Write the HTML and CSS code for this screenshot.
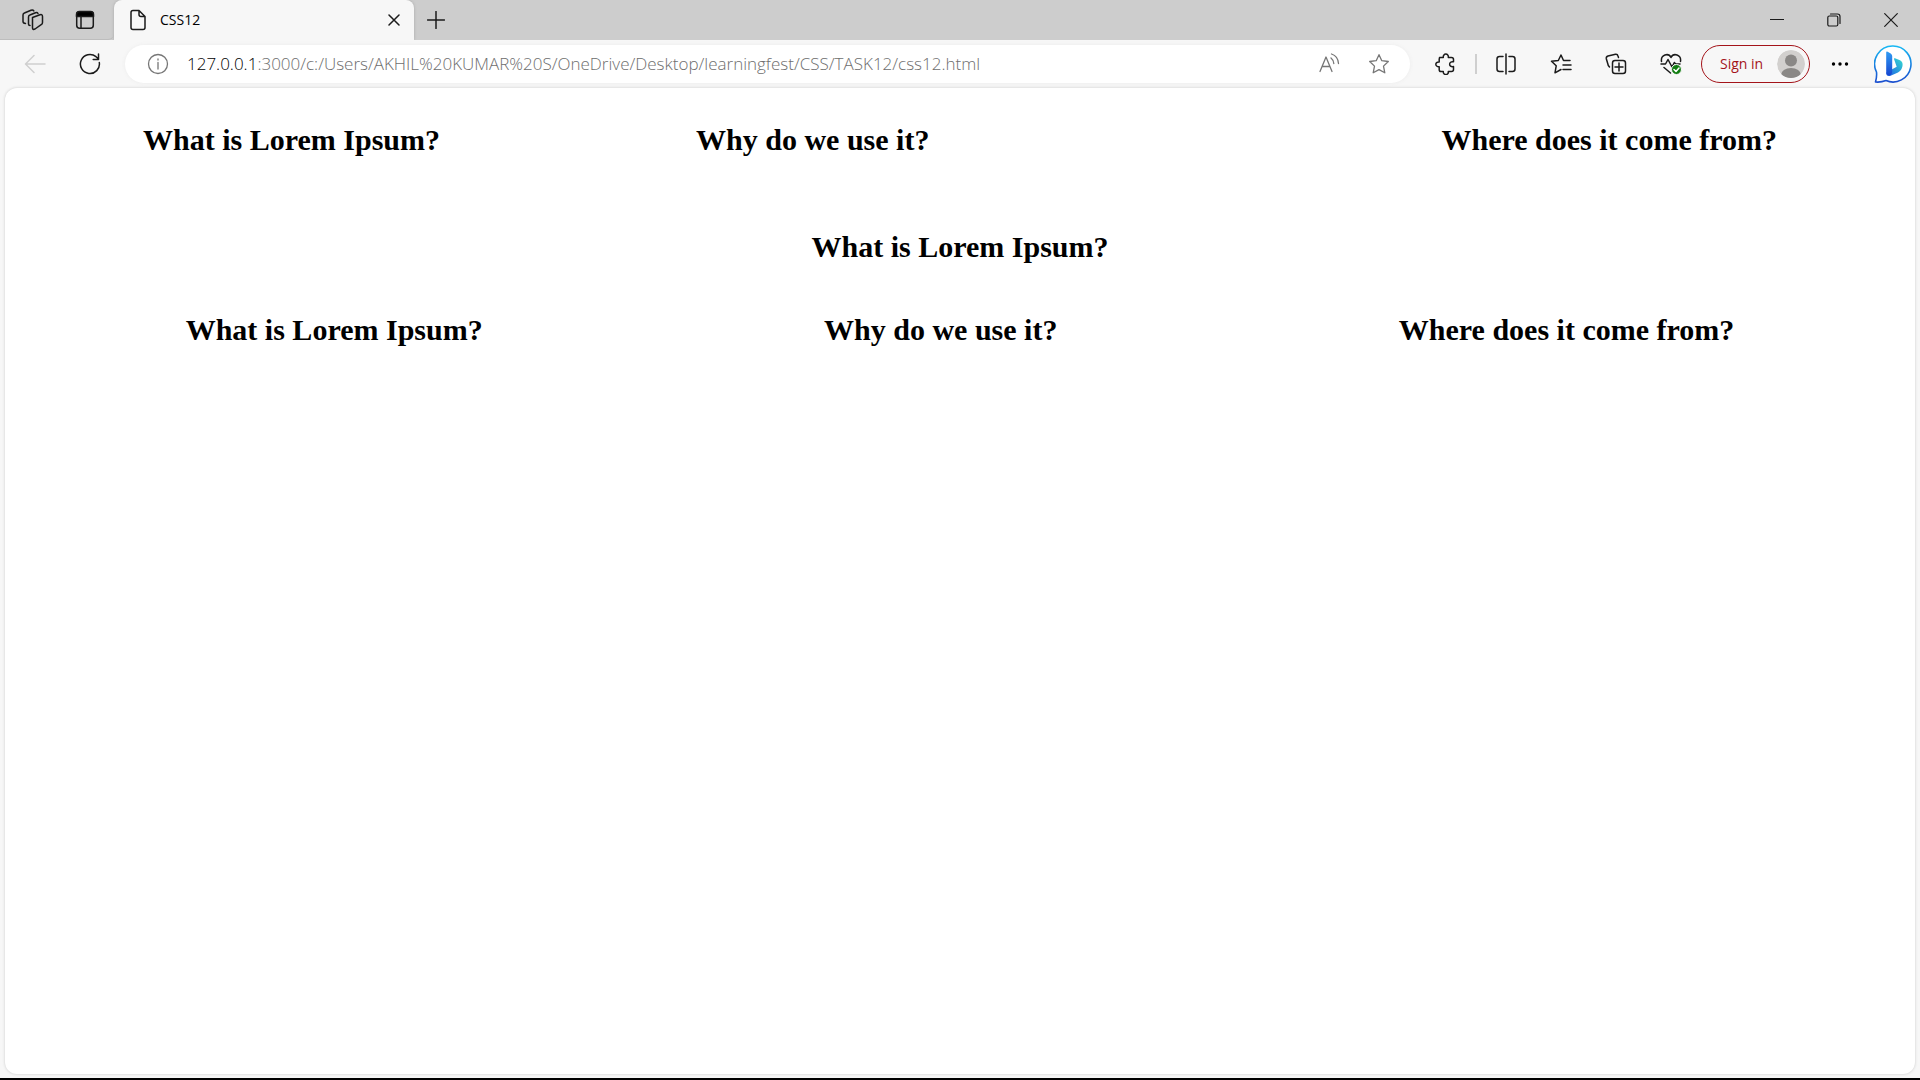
FILE: index.html
```html
<!DOCTYPE html>
<html lang="en">
<head>
<meta charset="utf-8">
<meta name="viewport" content="width=device-width, initial-scale=1">
<title>CSS12</title>
<link rel="stylesheet" href="styles.css">
</head>
<body>
<header class="tab-strip">
  <div class="strip-tools">
    <button class="icon-button" type="button" aria-label="Workspaces">
      <svg width="22" height="22" viewBox="0 0 22 22"><path d="M10.500 8.500 18 5.800q2.500-.8 2.500 1.700v6q0 1.500-1.300 2.200l-6.200 4.300q-2.500 1.200-2.500-1.200V10q0-1 0-1.500zM8 16.500q-1.500 0-1.500-1.500V8q0-1.500 1.400-2l5.600-2.300q1.800-.7 2.500.8M3.500 14.500Q1 14.300 1 12.500V6q0-1.500 1.400-2L9 1.300q2-.7 2.800.6"/></svg>
    </button>
    <button class="icon-button" type="button" aria-label="Tab actions">
      <svg width="20" height="20" viewBox="0 0 20 20"><rect x="1.700" y="1.700" width="16.600" height="16.600" rx="3"/><path d="M6 6v12"/><path class="solid" d="M1.500 6.500V4.500q0-3 3-3h11q3 0 3 3v2z"/></svg>
    </button>
  </div>
  <div class="tab">
    <svg class="tab-icon" width="18" height="22" viewBox="0 0 18 22"><path d="M2 3.500Q2 1.500 4 1.500h6L16 7.500v11q0 2-2 2H4q-2 0-2-2zM10 1.500v4q0 2 2 2h4"/></svg>
    <span class="tab-title">CSS12</span>
    <button class="tab-close" type="button" aria-label="Close tab">
      <svg width="12" height="12" viewBox="0 0 12 12"><path d="m1 1 10 10M11 1 1 11"/></svg>
    </button>
  </div>
  <button class="new-tab" type="button" aria-label="New tab">
    <svg width="18" height="18" viewBox="0 0 18 18"><path d="M9 .5v17M.5 9h17"/></svg>
  </button>
  <div class="window-controls">
    <button type="button" aria-label="Minimize"><svg class="thin" width="14" height="14" viewBox="0 0 14 14"><path d="M.5 6.500h13"/></svg></button>
    <button type="button" aria-label="Restore"><svg class="thin" width="14" height="14" viewBox="0 0 14 14"><rect x=".8" y="3" width="10" height="10" rx="1.500"/><path d="M3.500 1h7q2.500 0 2.500 2.500v7"/></svg></button>
    <button type="button" aria-label="Close window"><svg class="thin" width="14" height="14" viewBox="0 0 14 14"><path d="m.7.700 12.600 12.600M13.300.700.700 13.300"/></svg></button>
  </div>
</header>

<nav class="toolbar" aria-label="Browser toolbar">
  <button class="icon-button back" type="button" aria-label="Back">
    <svg width="22" height="20" viewBox="0 0 22 20"><path d="M21 10H2M10 1.500 1.500 10l8.500 8.500"/></svg>
  </button>
  <button class="icon-button" type="button" aria-label="Reload">
    <svg width="22" height="22" viewBox="0 0 22 22"><path d="M20.300 9.500A9.500 9.500 0 1 1 17 3.700l2.500 2.300M19.500 1v5.500h-5.300"/></svg>
  </button>
  <form class="address">
    <button class="info" type="button" aria-label="Site information">
      <svg width="22" height="22" viewBox="0 0 22 22"><circle cx="11" cy="11" r="9.500"/><path d="M11 9.500v6.500M11 6v1"/></svg>
    </button>
    <label class="host" for="url">127.0.0.1</label>
    <input class="path" id="url" type="text" spellcheck="false" value=":3000/c:/Users/AKHIL%20KUMAR%20S/OneDrive/Desktop/learningfest/CSS/TASK12/css12.html">
    <button class="address-action" type="button" aria-label="Read aloud">
      <svg width="22" height="22" viewBox="0 0 22 22"><path d="M2 18.500 8 4l6 14.500M4 13.500h8M13 5q2.500 2 2.800 5.500M13.500 1q6.500 2 7 9.500"/></svg>
    </button>
    <button class="address-action" type="button" aria-label="Add to favorites">
      <svg width="22" height="22" viewBox="0 0 22 22"><path d="M11 1.700 13.800 7.700l6.500.8-4.800 4.600 1.300 6.700L11 16.600l-5.800 3.200 1.300-6.700L1.700 8.500l6.500-.8z"/></svg>
    </button>
  </form>
  <div class="actions">
    <button class="icon-button" type="button" aria-label="Extensions">
      <svg width="22" height="22" viewBox="0 0 22 22"><path d="M5.500 4.500H9.300C8.700-.200 15 .100 14.300 4.500h3.200q2 0 2 2v2.300c-5-1-5.300 5.800 0 4.800v2.900q0 2-2 2h-3.200c.7 4-5.500 4-5 0H7q-1.800 0-1.800-1.800v-3C.700 14 .700 8.500 5.200 9V6q0-1.500 1.300-1.500"/></svg>
    </button>
    <span class="separator"></span>
    <button class="icon-button" type="button" aria-label="Split screen">
      <svg width="22" height="22" viewBox="0 0 22 22"><path d="M11 1v20M8 3.500H4.500q-2.500 0-2.500 2.500v10q0 2.500 2.500 2.500H8M14 3.500h3.500Q20 3.500 20 6v10q0 2.500-2.500 2.500H14"/></svg>
    </button>
    <button class="icon-button spaced" type="button" aria-label="Favorites">
      <svg width="22" height="22" viewBox="0 0 22 22"><path d="M20 7.500h-6.500L11 2 8.300 7.500 1.500 8.300l4.700 4.500-1.200 7L11 16.500M13 12h8M13 16.500h8"/></svg>
    </button>
    <button class="icon-button spaced" type="button" aria-label="Collections">
      <svg width="22" height="22" viewBox="0 0 22 22"><rect x="7.500" y="7.500" width="13" height="13" rx="2.500"/><path d="M14 10v8M10 14h8M4.500 14 3.300 12.500 1.300 5.700Q1 3.700 3 3L10.500 1.300q2-.3 2.500 1.700l.5 1.500"/></svg>
    </button>
    <button class="icon-button spaced" type="button" aria-label="Browser essentials">
      <svg width="22" height="22" viewBox="0 0 22 22"><path d="M1.500 8.500C.500 1.500 8.500-.500 11 4.500c2.500-5 10.500-3 9.500 4M1 11h4.500L8 6.500l4 7.500 2.300-4.500 1.500 1.500H20M4 14.500l6.500 5.500"/><circle class="badge" cx="16.500" cy="16.500" r="5"/><path class="tick" d="m14 16.500 2 2 3-3.500"/></svg>
    </button>
    <button class="sign-in" type="button">
      <span>Sign in</span>
      <svg class="avatar" width="28" height="28" viewBox="0 0 28 28"><defs><clipPath id="face"><circle cx="14" cy="14" r="14"/></clipPath></defs><g clip-path="url(#face)"><circle cx="14" cy="14" r="14" fill="#d2d0ce"/><circle cx="14" cy="10.500" r="6" fill="#8a8886"/><ellipse cx="14" cy="25" rx="10" ry="7" fill="#8a8886"/></g></svg>
    </button>
    <button class="icon-button more" type="button" aria-label="Settings and more">
      <svg width="18" height="6" viewBox="0 0 18 6"><g class="dots"><circle cx="2.500" cy="3" r="1.700"/><circle cx="9" cy="3" r="1.700"/><circle cx="15.500" cy="3" r="1.700"/></g></svg>
    </button>
    <button class="bing" type="button" aria-label="Bing chat">
      <svg width="38" height="38" viewBox="0 0 38 38"><defs><linearGradient id="ring" x1="0" y1="0" x2="0" y2="1"><stop offset="0" stop-color="#18b8f3"/><stop offset="1" stop-color="#1b4fcf"/></linearGradient><linearGradient id="stem" x1="0" y1="0" x2="0" y2="1"><stop offset="0" stop-color="#2f9cf4"/><stop offset="1" stop-color="#1646d0"/></linearGradient><linearGradient id="bowl" x1="1" y1="0" x2="0" y2="1"><stop offset="0" stop-color="#35dcd0"/><stop offset="1" stop-color="#1d5be6"/></linearGradient></defs><path d="M19 1a18 18 0 1 1-7 34.600Q7 37.500 1.500 37 3 32 2.500 27A18 18 0 0 1 19 1z" fill="#fff" stroke="url(#ring)" stroke-width="1.600"/><path d="M20 14q-.3-1 1-.7l5 2q3.200 1.600 2.500 5.700-.8 4.500-4.500 6.500L16 31q-4 .5-3.800-3.500l10.500-5.800z" fill="url(#bowl)"/><path d="M12.200 7.500q0-1.500 1.500-.7l3 1.700q1.500 1 1.500 2.500v15q0 4-3 4.500-3 .2-3-4z" fill="url(#stem)"/></svg>
    </button>
  </div>
</nav>

<main class="page">
  <section class="row row-offset">
    <h2>What is Lorem Ipsum?</h2>
    <h2>Why do we use it?</h2>
    <h2>Where does it come from?</h2>
  </section>
  <section class="row row-center">
    <h2>What is Lorem Ipsum?</h2>
  </section>
  <section class="row">
    <h2>What is Lorem Ipsum?</h2>
    <h2>Why do we use it?</h2>
    <h2>Where does it come from?</h2>
  </section>
</main>
</body>
</html>
```
FILE: styles.css
```css
* {
  box-sizing: border-box;
}

body {
  display: flex;
  flex-direction: column;
  min-height: 100vh;
  margin: 0;
  border-bottom: 2px solid #000;
  background: #f7f7f7;
  color: #000;
  font-family: "Open Sans", "Noto Sans", sans-serif;
}

button {
  display: flex;
  align-items: center;
  justify-content: center;
  padding: 0;
  border: 0;
  background: none;
  color: inherit;
  font: inherit;
}

svg {
  flex: none;
  fill: none;
  stroke: #1b1b1b;
  stroke-width: 1.5;
  stroke-linecap: round;
  stroke-linejoin: round;
}

.solid,
.dots {
  fill: #000;
}

.thin {
  stroke-width: 1.2;
}

.icon-button {
  flex: none;
  width: 40px;
  height: 40px;
}

/* Tab strip */
.tab-strip {
  display: flex;
  height: 40px;
  background: #cdcdcd;
}

.strip-tools {
  display: flex;
  gap: 12px;
  width: 114px;
  padding-left: 13px;
  border-bottom: 1px solid #bdbdbd;
  border-radius: 0 0 6px 0;
}

.tab {
  display: flex;
  align-items: center;
  width: 300px;
  padding: 0 14px 0 15px;
  border-radius: 8px 8px 0 0;
  background: #f7f7f7;
  box-shadow: 0 0 3px #a8a8a8;
  clip-path: inset(0 -3px);
}

.tab-title {
  flex: 1;
  margin-left: 13px;
  font-size: 14px;
  line-height: 20px;
}

.new-tab {
  width: 43px;
}

.window-controls {
  display: flex;
  margin-left: auto;
  padding-right: 1px;
}

.window-controls button {
  width: 57px;
}

/* Toolbar */
.toolbar {
  display: flex;
  align-items: center;
  gap: 15px;
  height: 48px;
  padding: 0 8px 0 15px;
}

.back svg {
  stroke: #cfcfcf;
}

.address {
  display: flex;
  flex: 1;
  align-items: center;
  min-width: 0;
  height: 38px;
  padding: 0 11px 0 13px;
  border-radius: 19px;
  background: #fff;
  box-shadow: 0 0 4px #ececec;
  font-size: 17px;
  font-weight: 350;
  line-height: 24px;
}

.address svg {
  stroke: #767676;
  stroke-width: 1.3;
}

.info {
  width: 40px;
}

.host {
  margin-left: 9px;
}

.path {
  flex: 1;
  min-width: 0;
  padding: 0;
  border: 0;
  outline: 0;
  background: none;
  color: #6e6e6e;
  font: inherit;
}

.address-action {
  width: 40px;
  margin-left: 10px;
}

.actions {
  display: flex;
  align-items: center;
}

.separator {
  width: 2px;
  height: 20px;
  margin: 0 9px 0 10px;
  background: #cfcfcf;
}

.spaced {
  margin-left: 15px;
}

.badge {
  fill: #107c10;
  stroke: #f7f7f7;
  stroke-width: 1;
}

.tick {
  stroke: #fff;
}

.sign-in {
  justify-content: space-between;
  width: 109px;
  height: 38px;
  margin-left: 10px;
  padding: 0 4px 0 18px;
  border: 1px solid #a4141a;
  border-radius: 19px;
  color: #a4141a;
  font-size: 14px;
  line-height: 20px;
}

.avatar {
  stroke: none;
}

.dots {
  stroke: none;
}

.more {
  margin-left: 10px;
}

.bing {
  margin-left: 14px;
}

.bing svg {
  stroke: none;
}

/* Web page */
.page {
  flex: 1;
  margin: 0 5px 4px;
  padding: 35px 10px;
  border-radius: 12px;
  background: #fff;
  box-shadow: 0 0 3px #c8c8c8;
  font-family: "Liberation Serif", serif;
}

.row {
  display: flex;
  justify-content: space-around;
}

.row h2 {
  margin: 0;
  font-size: 30px;
  line-height: 34px;
}

/* An empty slot sits between the second and third headings. */
.row-offset::after {
  order: 1;
  content: "";
}

.row-offset h2:last-child {
  order: 2;
}

.row-center {
  margin: 73px 0 49px;
}
```
